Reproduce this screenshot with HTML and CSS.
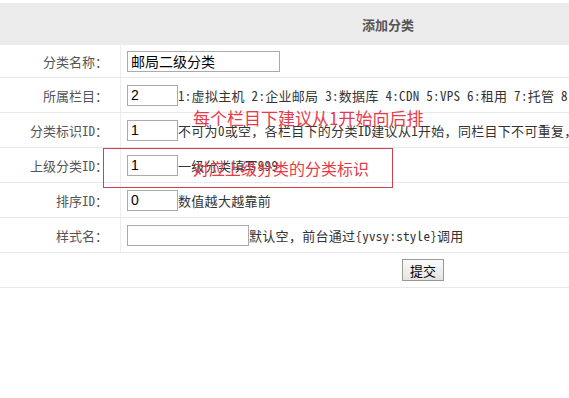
FILE: index.html
```html
<!DOCTYPE html>
<html lang="zh-CN">
<head>
  <meta charset="UTF-8" />
  <title>添加分类</title>
  <link rel="stylesheet" href="styles.css">
</head>
<body>
  <div class="page">
    <table class="form-table">
      <tr class="title-row">
        <th colspan="2">添加分类</th>
      </tr>
      <tr class="first">
        <td class="label">分类名称：</td>
        <td><input class="txt wide" type="text" value="邮局二级分类"></td>
      </tr>
      <tr>
        <td class="label">所属栏目：</td>
        <td><input class="txt short" type="text" value="2"><span class="tip">1:虚拟主机 2:企业邮局 3:数据库 4:CDN 5:VPS 6:租用 7:托管 8:其他</span></td>
      </tr>
      <tr>
        <td class="label">分类标识ID：</td>
        <td><input class="txt short" type="text" value="1"><span class="tip">不可为0或空，各栏目下的分类ID建议从1开始，同栏目下不可重复，</span></td>
      </tr>
      <tr>
        <td class="label">上级分类ID：</td>
        <td><input class="txt short" type="text" value="1"><span class="tip">一级分类填写999</span></td>
      </tr>
      <tr>
        <td class="label">排序ID：</td>
        <td><input class="txt short" type="text" value="0"><span class="tip">数值越大越靠前</span></td>
      </tr>
      <tr>
        <td class="label">样式名：</td>
        <td><input class="txt mid" type="text" value=""><span class="tip">默认空，前台通过{yvsy:style}调用</span></td>
      </tr>
      <tr class="submit-row">
        <td colspan="2"><button class="btn" type="button">提交</button></td>
      </tr>
    </table>

    <!-- red notes drawn over the form -->
    <div class="note note-top">每个栏目下建议从1开始向后排</div>
    <div class="note-box">
      <span class="note note-in">对应上级分类的分类标识</span>
    </div>
  </div>
</body>
</html>
```

FILE: styles.css
```css
body {
  margin: 0;
  padding: 0;
  background: #fff;
  overflow: hidden;
  font-family: "Noto Sans Mono CJK SC", "Noto Sans CJK SC", sans-serif;
  font-size: 13px;
  color: #333;
}
.page {
  position: relative;
  padding-top: 3px;
}
.form-table {
  width: 776px;
  border-collapse: collapse;
}
.form-table td,
.form-table th {
  padding: 0;
  border-bottom: 1px solid #e8e8e8;
  height: 34px;
  white-space: nowrap;
}
.title-row th {
  background-color: #ececec;
  color: #555;
  font-weight: bold;
  height: 42px;
  border-bottom: none;
  text-align: center;
}
.form-table tr.first td {
  height: 32px;
}
.label {
  width: 108px;
  padding-right: 12px !important;
  text-align: right;
  color: #555;
  border-right: 1px solid #ececec;
}
.form-table td:last-child {
  padding-left: 6px;
}
.txt {
  box-sizing: border-box;
  height: 21px;
  margin: 0;
  padding: 0 3px;
  border: 1px solid #aaa;
  font-family: "Liberation Sans", "Noto Sans CJK SC", sans-serif;
  font-size: 14px;
  color: #000;
  vertical-align: middle;
}
.txt.wide {
  width: 153px;
}
.txt.short {
  width: 51px;
}
.txt.mid {
  width: 122px;
}
.tip {
  vertical-align: middle;
  letter-spacing: 0.3px;
}
.submit-row td {
  padding-left: 402px !important;
}
.btn {
  box-sizing: border-box;
  width: 42px;
  height: 22px;
  padding: 0;
  border: 1px solid #999;
  background: linear-gradient(#fafafa, #e4e4e4);
  font-family: "Noto Sans CJK SC", sans-serif;
  font-size: 13px;
  color: #000;
}
.note {
  position: absolute;
  color: #e83a48;
  font-family: "Noto Sans CJK SC", sans-serif;
  white-space: nowrap;
}
.note-top {
  left: 193px;
  top: 105px;
  font-size: 17px;
}
.note-box {
  position: absolute;
  left: 103px;
  top: 148px;
  width: 288px;
  height: 38px;
  border: 1px solid #d0404c;
}
.note-in {
  left: 89px;
  top: 7px;
  font-size: 16px;
}
```
